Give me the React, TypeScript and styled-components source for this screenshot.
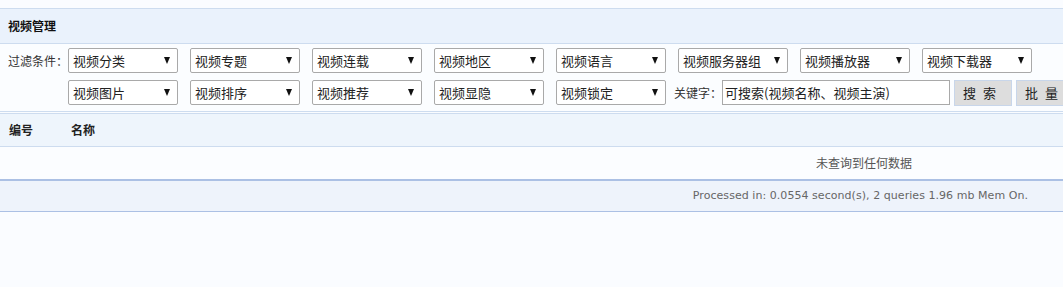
import { FunctionComponent } from "react";
import styled, { createGlobalStyle } from "styled-components";

const GlobalStyle = createGlobalStyle`
  html, body {
    margin: 0;
    padding: 0;
    background: #fafcff;
  }
  body {
    font-family: "Noto Sans CJK SC", "Liberation Sans", sans-serif;
    font-size: 12px;
    color: #333;
  }
`;

const Page = styled.div`
  padding-top: 8px;
`;

const TitleBar = styled.div`
  height: 34px;
  line-height: 34px;
  padding-left: 8px;
  border-top: 1px solid #cddcef;
  border-bottom: 1px solid #cddcef;
  background: #eaf2fc;
  font-weight: bold;
  font-size: 12px;
  color: #111;
`;

const FilterArea = styled.div`
  display: flex;
  padding: 4px 0 5px 8px;
  border-bottom: 1px solid #cddcef;
  background: #fbfdff;
`;

const FilterLabel = styled.div`
  width: 60px;
  height: 25px;
  line-height: 25px;
  font-size: 12px;
  color: #333;
  white-space: nowrap;
`;

const FilterRows = styled.div`
  display: flex;
  flex-direction: column;
  gap: 7px;
`;

const FilterRow = styled.div`
  display: flex;
  align-items: flex-start;
  gap: 12px;
`;

const SelectBox = styled.div`
  box-sizing: border-box;
  width: 110px;
  height: 25px;
  padding: 0 4px;
  display: flex;
  align-items: center;
  justify-content: space-between;
  border: 1px solid #a9a9a9;
  border-radius: 2px;
  background: #fff;
  font-size: 13px;
  color: #222;
`;

const Arrow = styled.span`
  width: 0;
  height: 0;
  margin-right: 3px;
  border-left: 3.5px solid transparent;
  border-right: 3.5px solid transparent;
  border-top: 7px solid #111;
`;

const KeywordGroup = styled.div`
  display: flex;
  align-items: flex-start;
  margin-left: -4px;
`;

const KeywordLabel = styled.span`
  height: 25px;
  line-height: 25px;
  width: 48px;
  font-size: 12px;
  white-space: nowrap;
`;

const KeywordInput = styled.div`
  box-sizing: border-box;
  width: 228px;
  height: 25px;
  line-height: 23px;
  padding-left: 2px;
  border: 1px solid #a9a9a9;
  background: #fff;
  font-size: 13px;
  color: #222;
  white-space: nowrap;
  overflow: hidden;
`;

const Button = styled.div<{ $w: number }>`
  box-sizing: border-box;
  width: ${(p) => p.$w}px;
  height: 26px;
  line-height: 24px;
  margin-left: 4px;
  border: 1px solid #c8d6ea;
  background: #dddddd;
  font-size: 13px;
  color: #222;
  text-align: center;
  letter-spacing: 7px;
  white-space: nowrap;
  flex-shrink: 0;
`;

const Table = styled.div`
  margin-top: 1px;
  border-top: 1px solid #cddcef;
`;

const HeadRow = styled.div`
  display: flex;
  height: 32px;
  line-height: 32px;
  background: #eef5fc;
  border-bottom: 1px solid #cddcef;
  font-size: 12px;
  font-weight: bold;
  color: #222;
`;

const HeadCell = styled.div<{ $w: number }>`
  width: ${(p) => p.$w}px;
  padding-left: 9px;
  box-sizing: border-box;
`;

const EmptyRow = styled.div`
  height: 32px;
  line-height: 32px;
  background: #fbfdff;
  text-align: right;
  padding-right: 151px;
  font-size: 12px;
  color: #555;
`;

const Footer = styled.div`
  height: 30px;
  line-height: 30px;
  border-top: 2px solid #abc0e4;
  border-bottom: 1px solid #abc0e4;
  background: #eef3fb;
  text-align: right;
  padding-right: 35px;
  font-family: "DejaVu Sans", "Liberation Sans", sans-serif;
  font-size: 11px;
  letter-spacing: 0.05px;
  color: #666;
`;

const Select: FunctionComponent<{ label: string }> = ({ label }) => (
  <SelectBox>
    <span>{label}</span>
    <Arrow />
  </SelectBox>
);

const row1 = [
  "视频分类",
  "视频专题",
  "视频连载",
  "视频地区",
  "视频语言",
  "视频服务器组",
  "视频播放器",
  "视频下载器",
];
const row2 = ["视频图片", "视频排序", "视频推荐", "视频显隐", "视频锁定"];

export default function App() {
  return (
    <Page>
      <GlobalStyle />
      <TitleBar>视频管理</TitleBar>
      <FilterArea>
        <FilterLabel>过滤条件：</FilterLabel>
        <FilterRows>
          <FilterRow>
            {row1.map((l) => (
              <Select key={l} label={l} />
            ))}
          </FilterRow>
          <FilterRow>
            {row2.map((l) => (
              <Select key={l} label={l} />
            ))}
            <KeywordGroup>
              <KeywordLabel>关键字：</KeywordLabel>
              <KeywordInput>可搜索(视频名称、视频主演)</KeywordInput>
              <Button $w={58}>搜索</Button>
              <Button $w={58}>批量</Button>
            </KeywordGroup>
          </FilterRow>
        </FilterRows>
      </FilterArea>
      <Table>
        <HeadRow>
          <HeadCell $w={62}>编号</HeadCell>
          <HeadCell $w={200}>名称</HeadCell>
        </HeadRow>
        <EmptyRow>未查询到任何数据</EmptyRow>
        <Footer>Processed in: 0.0554 second(s), 2 queries 1.96 mb Mem On.</Footer>
      </Table>
    </Page>
  );
}
